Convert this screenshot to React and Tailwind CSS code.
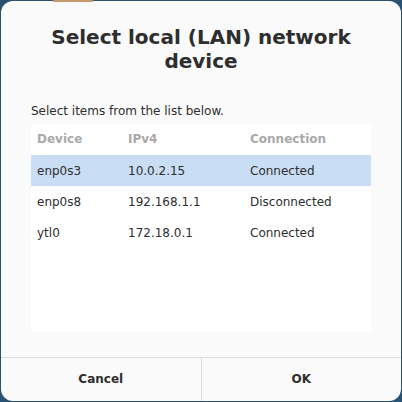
export default function App() {
  const rows = [
    { device: 'enp0s3', ip: '10.0.2.15', conn: 'Connected', selected: true },
    { device: 'enp0s8', ip: '192.168.1.1', conn: 'Disconnected' },
    { device: 'ytl0', ip: '172.18.0.1', conn: 'Connected' },
  ]

  return (
    <div className="w-[402px] h-[402px] bg-[#2b5170] relative overflow-hidden" style={{ fontFamily: '"DejaVu Sans", sans-serif' }}>
      {/* window behind the dialog */}
      <div className="absolute left-[53px] top-0 w-[40px] h-[2px] bg-[#c49a6c]" />
      <div className="ml-[1px] mt-[1px] w-[400px] h-[400px] rounded-[12px] bg-[#fafafa] flex flex-col overflow-hidden">
        <h1 className="mt-[24px] px-6 text-center text-[20px] leading-[24px] font-bold text-[#2e2e2e]">
          Select local (LAN) network device
        </h1>

        <p className="mt-[30px] px-[30px] text-[12px] leading-[16px] text-[#2e2e2e]">Select items from the list below.</p>

        <div className="mt-[5px] mx-[30px] h-[208px] bg-white">
          <div className="flex h-[31px] items-center pb-[1px] text-[12px] font-bold text-[#a9a9a9]">
            <span className="w-[97px] pl-[6px]">Device</span>
            <span className="w-[122px]">IPv4</span>
            <span>Connection</span>
          </div>
          {rows.map((r) => (
            <div key={r.device} className={`flex h-[31px] items-center text-[12px] text-[#2e2e2e] ${r.selected ? 'bg-[#c9ddf5]' : ''}`}>
              <span className="w-[97px] pl-[6px]">{r.device}</span>
              <span className="w-[122px]">{r.ip}</span>
              <span>{r.conn}</span>
            </div>
          ))}
        </div>

        <div className="mt-auto flex h-[44px] border-t border-[#dcdcdc]">
          <button className="flex-1 pb-[2px] text-[12px] font-bold text-[#2e2e2e] border-r border-[#dcdcdc]">Cancel</button>
          <button className="flex-1 pb-[2px] text-[12px] font-bold text-[#2e2e2e]">OK</button>
        </div>
      </div>
    </div>
  )
}
